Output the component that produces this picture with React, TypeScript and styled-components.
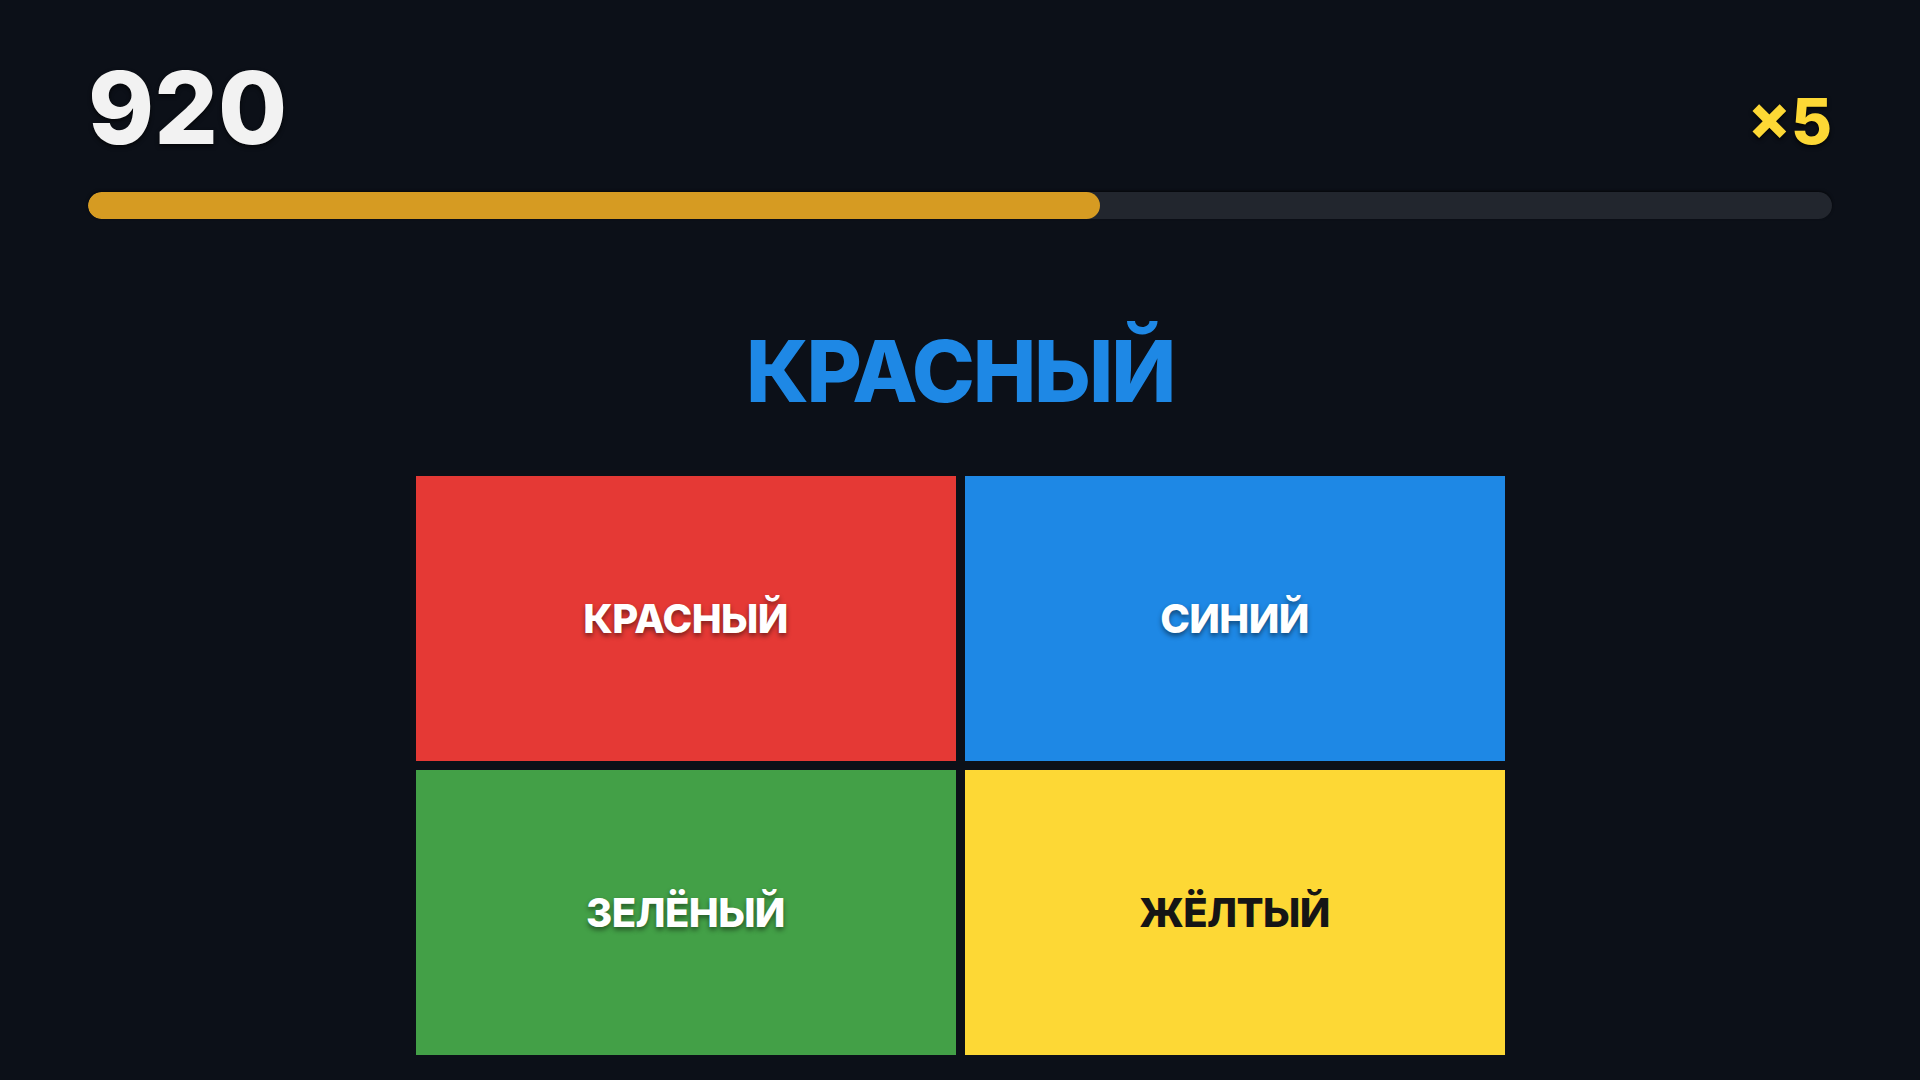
import styled, { createGlobalStyle } from 'styled-components';

const GlobalStyle = createGlobalStyle`
    html, body {
        margin: 0;
        padding: 0;
        background: #0c1018;
        font-family: Inter, "Liberation Sans", Arial, sans-serif;
    }
`;

const Screen = styled.div`
    width: 1920px;
    height: 1080px;
    overflow: hidden;
    background: #0c1018;
    display: flex;
    flex-direction: column;
    align-items: center;
`;

const Top = styled.div`
    width: 1744px;
    display: flex;
    flex-direction: column;
`;

const Header = styled.div`
    display: flex;
    justify-content: space-between;
    align-items: baseline;
    padding-top: 58px;
`;

const Score = styled.div`
    font-size: 100px;
    line-height: 1;
    font-weight: 800;
    color: #f2f2f2;
    text-shadow: 0 2px 4px rgba(0, 0, 0, 0.7);
`;

const Multiplier = styled.div`
    font-size: 63px;
    line-height: 1;
    font-weight: 800;
    color: #fdd835;
    text-shadow: 0 2px 4px rgba(0, 0, 0, 0.8);
`;

const Track = styled.div`
    margin-top: 34px;
    height: 27px;
    border-radius: 14px;
    background: #22262e;
    box-shadow: 0 -1px 3px rgba(0, 0, 0, 0.6);
    overflow: hidden;
`;

const Fill = styled.div`
    height: 100%;
    border-radius: 14px;
    background: #d69b22;
`;

const Word = styled.div<{ $color: string }>`
    margin-top: 110px;
    font-size: 85px;
    line-height: 1;
    font-weight: 800;
    letter-spacing: -2.2px;
    color: ${p => p.$color};
`;

const Grid = styled.div`
    margin-top: 62px;
    display: grid;
    grid-template-columns: 540px 540px;
    grid-auto-rows: 285px;
    gap: 9px;
`;

const Tile = styled.button<{ $bg: string; $fg: string }>`
    border: none;
    margin: 0;
    padding: 0;
    background: ${p => p.$bg};
    color: ${p => p.$fg};
    font-family: Inter, "Liberation Sans", Arial, sans-serif;
    font-size: 40px;
    font-weight: 800;
    letter-spacing: -0.6px;
    display: flex;
    align-items: center;
    justify-content: center;
    text-shadow: ${p => (p.$fg === '#ffffff' ? '0 3px 5px rgba(0, 0, 0, 0.45)' : 'none')};
    cursor: pointer;
`;

const options = [
    { label: 'КРАСНЫЙ', bg: '#e53935', fg: '#ffffff' },
    { label: 'СИНИЙ', bg: '#1e88e5', fg: '#ffffff' },
    { label: 'ЗЕЛЁНЫЙ', bg: '#43a047', fg: '#ffffff' },
    { label: 'ЖЁЛТЫЙ', bg: '#fdd835', fg: '#151515' },
];

const App = () => {
    const progress = 58;

    return (
        <>
            <GlobalStyle />
            <Screen>
                <Top>
                    <Header>
                        <Score>920</Score>
                        <Multiplier>×5</Multiplier>
                    </Header>
                    <Track>
                        <Fill style={{ width: `${progress}%` }} />
                    </Track>
                </Top>
                <Word $color="#1e88e5">КРАСНЫЙ</Word>
                <Grid>
                    {options.map(o => (
                        <Tile key={o.label} $bg={o.bg} $fg={o.fg}>{o.label}</Tile>
                    ))}
                </Grid>
            </Screen>
        </>
    );
};

export default App;
